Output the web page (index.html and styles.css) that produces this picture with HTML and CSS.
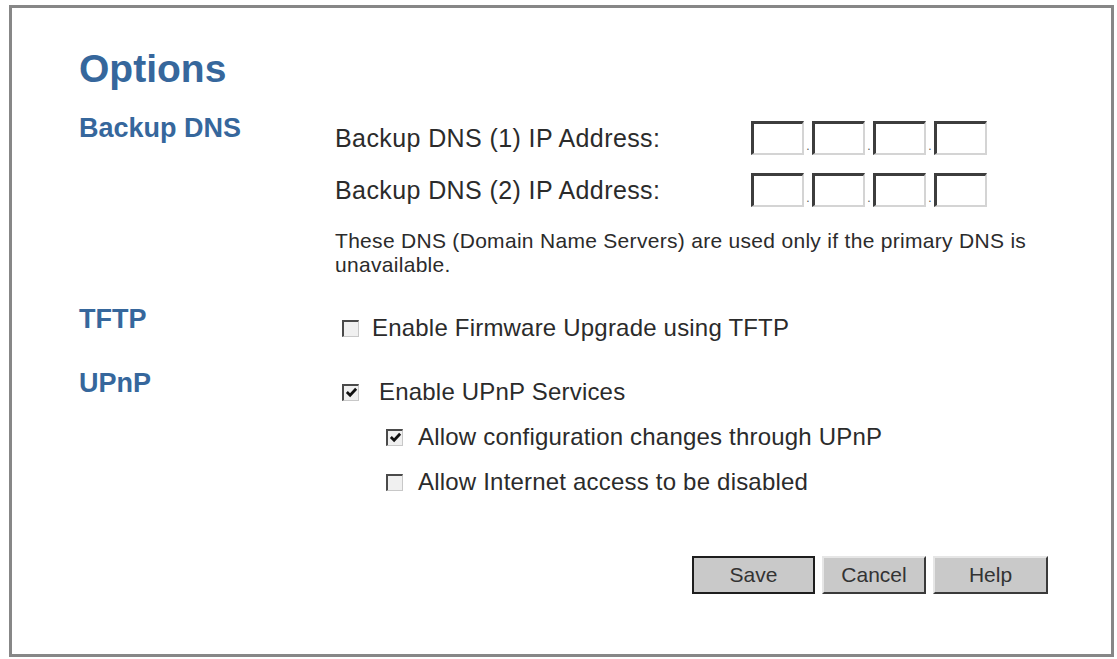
FILE: index.html
```html
<html>
  <head>
    <meta charset="utf-8">
    <title>Options</title>
    <link rel="stylesheet" href="styles.css">
  </head>
  <body>
    <div id="frame">
      <h1 class="page-title">Options</h1>

      <div class="section" id="backup-dns">
        <h2 class="section-label">Backup DNS</h2>
        <div class="section-body">
          <div class="ip-row">
            <span class="ip-label">Backup DNS (1) IP Address:</span>
            <span class="ip-fields">
              <input class="octet" type="text"><span class="dot">.</span><input class="octet" type="text"><span class="dot">.</span><input class="octet" type="text"><span class="dot">.</span><input class="octet" type="text">
            </span>
          </div>
          <div class="ip-row">
            <span class="ip-label">Backup DNS (2) IP Address:</span>
            <span class="ip-fields">
              <input class="octet" type="text"><span class="dot">.</span><input class="octet" type="text"><span class="dot">.</span><input class="octet" type="text"><span class="dot">.</span><input class="octet" type="text">
            </span>
          </div>
          <p class="note">These DNS (Domain Name Servers) are used only if the primary DNS is unavailable.</p>
        </div>
      </div>

      <div class="section" id="tftp">
        <h2 class="section-label">TFTP</h2>
        <div class="section-body">
          <label class="check-row">
            <span class="box"></span>
            <span class="check-text">Enable Firmware Upgrade using TFTP</span>
          </label>
        </div>
      </div>

      <div class="section" id="upnp">
        <h2 class="section-label">UPnP</h2>
        <div class="section-body">
          <label class="check-row wide">
            <span class="box"><svg viewBox="0 0 14 14" width="13" height="13"><path d="M2 6.5 L5.5 10 L12 3" fill="none" stroke="#111" stroke-width="3"/></svg></span>
            <span class="check-text">Enable UPnP Services</span>
          </label>
          <label class="check-row sub">
            <span class="box"><svg viewBox="0 0 14 14" width="13" height="13"><path d="M2 6.5 L5.5 10 L12 3" fill="none" stroke="#111" stroke-width="3"/></svg></span>
            <span class="check-text">Allow configuration changes through UPnP</span>
          </label>
          <label class="check-row sub">
            <span class="box"></span>
            <span class="check-text">Allow Internet access to be disabled</span>
          </label>
        </div>
      </div>

      <div class="buttons">
        <button class="btn btn-default">Save</button>
        <button class="btn">Cancel</button>
        <button class="btn">Help</button>
      </div>
    </div>
  </body>
</html>
```

FILE: styles.css
```css
/* Page */
body {
  margin: 0;
  background: #fff;
  font-family: "Liberation Sans", Arial, sans-serif;
  color: #2b2b2b;
}

/* Grey box round the whole form */
#frame {
  box-sizing: border-box;
  height: 652px;
  margin: 5px 3px 2px 9px;
  padding: 42px 63px 0 67px;
  border: 3px solid #878787;
}

.page-title {
  margin: 0;
  font-size: 39px;
  line-height: 38px;
  font-weight: bold;
  color: #36679c;
}

/* Label column on the left, controls on the right */
.section {
  display: grid;
  grid-template-columns: 256px 1fr;
}

.section-label {
  margin: 0;
  font-size: 27px;
  line-height: 26px;
  font-weight: bold;
  color: #36679c;
}

.section-body {
  padding-top: 6px;
}

#backup-dns {
  margin-top: 27px;
}

#tftp {
  margin-top: 29px;
}

  #tftp .section-body,
  #upnp .section-body {
    padding-top: 8px;
  }

#upnp {
  margin-top: 28px;
}

/* IP address rows */
.ip-row {
  display: flex;
  align-items: center;
  height: 34px;
  font-size: 25px;
}

  .ip-row + .ip-row {
    margin-top: 18px;
  }

.ip-label {
  width: 416px;
  letter-spacing: 0.4px;
}

.ip-fields {
  display: flex;
  align-items: stretch;
  height: 34px;
}

.octet {
  box-sizing: border-box;
  width: 53px;
  height: 34px;
  margin: 0;
  padding: 0;
  background: #fff;
  border-top: 3px solid #3d3d3d;
  border-left: 3px solid #3d3d3d;
  border-right: 2px solid #d4d4d4;
  border-bottom: 2px solid #d4d4d4;
  outline: none;
}

.dot {
  width: 8px;
  font-size: 12px;
  line-height: 12px;
  color: #555;
  align-self: flex-end;
  text-align: center;
  margin-bottom: 3px;
}

.note {
  margin: 22px 0 0;
  font-size: 21px;
  line-height: 24px;
  letter-spacing: 0.3px;
  max-width: 715px;
}

/* Checkbox rows */
.check-row {
  display: flex;
  align-items: center;
  height: 28px;
  font-size: 24px;
  letter-spacing: 0.2px;
  padding-left: 7px;
}

  .check-row + .check-row {
    margin-top: 17px;
  }

.box {
  box-sizing: border-box;
  display: flex;
  align-items: center;
  justify-content: center;
  width: 17px;
  height: 17px;
  margin-right: 13px;
  background: #f0f0f0;
  border-top: 2px solid #4a4a4a;
  border-left: 2px solid #4a4a4a;
  border-right: 1px solid #c8c8c8;
  border-bottom: 1px solid #c8c8c8;
}

.wide .box {
  margin-right: 20px;
}

.sub {
  padding-left: 51px;
}

  .sub .box {
    margin-right: 15px;
  }

/* Save / Cancel / Help */
.buttons {
  display: flex;
  justify-content: flex-end;
  gap: 7px;
  margin-top: 60px;
}

.btn {
  box-sizing: border-box;
  height: 38px;
  padding: 0;
  font-family: "Liberation Sans", Arial, sans-serif;
  font-size: 21px;
  color: #333;
  background: #c9c9c9;
  border-top: 2px solid #e6e6e6;
  border-left: 2px solid #e6e6e6;
  border-right: 2px solid #3a3a3a;
  border-bottom: 2px solid #3a3a3a;
}

  .btn:nth-child(1) {
    width: 123px;
  }

  .btn:nth-child(2) {
    width: 104px;
  }

  .btn:nth-child(3) {
    width: 115px;
  }

.btn-default {
  border: 2px solid #1e1e1e;
}
```
